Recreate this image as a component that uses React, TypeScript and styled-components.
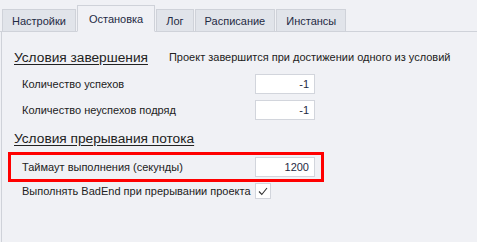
import { styled, createGlobalStyle } from "styled-components";

const GlobalStyle = createGlobalStyle`
  html, body {
    margin: 0;
    padding: 0;
    background: #f0f1f5;
    font-family: "Liberation Sans", Arial, sans-serif;
  }
`;

const Window = styled.div`
  width: 477px;
  height: 242px;
  display: flex;
  flex-direction: column;
  background: #f0f1f5;
  overflow: hidden;
`;

const TabStrip = styled.div`
  display: flex;
  align-items: flex-end;
  height: 32px;
  padding-left: 2px;
  border-bottom: 1px solid #cfd2d9;
  box-sizing: border-box;
`;

const Tab = styled.div<{ $active?: boolean }>`
  height: ${(p) => (p.$active ? "27px" : "23px")};
  margin-bottom: -1px;
  padding: 0 ${(p) => (p.$active ? "11px" : "9px")};
  display: flex;
  align-items: center;
  font-size: 11px;
  color: #1f2a44;
  background: ${(p) => (p.$active ? "#f0f1f5" : "#e1e4ea")};
  border: 1px solid #cfd2d9;
  border-bottom-color: ${(p) => (p.$active ? "#f0f1f5" : "#cfd2d9")};
  box-sizing: border-box;
  & + & {
    margin-left: 1px;
  }
`;

const Panel = styled.div`
  flex: 1;
  margin-left: 1px;
  border-left: 1px solid #cfd2d9;
  display: flex;
  flex-direction: column;
  padding-top: 15px;
`;

const SectionRow = styled.div<{ $top?: number }>`
  display: flex;
  align-items: center;
  height: 20px;
  padding-left: 12px;
  margin-top: ${(p) => p.$top ?? 0}px;
  white-space: nowrap;
`;

const SectionTitle = styled.span`
  font-size: 13.7px;
  color: #222;
  text-decoration: underline;
  text-underline-offset: 2px;
`;

const Note = styled.span`
  margin-left: 21px;
  font-size: 11px;
  color: #222;
`;

const FieldRow = styled.div<{ $top?: number; $highlight?: boolean }>`
  display: grid;
  grid-template-columns: 233px 60px;
  align-items: center;
  margin-top: ${(p) => p.$top ?? 0}px;
  ${(p) =>
    p.$highlight
      ? `
    margin-left: 6px;
    width: 316px;
    box-sizing: border-box;
    border: 3px solid #ff0000;
    padding: 2px 0 2px 11px;
  `
      : `
    padding-left: 20px;
  `}
`;

const Label = styled.span`
  font-size: 11px;
  color: #222;
  white-space: nowrap;
`;

const NumberBox = styled.div`
  height: 20px;
  box-sizing: border-box;
  background: #fff;
  border: 1px solid #d2d5dc;
  font-size: 11px;
  color: #1f2a44;
  display: flex;
  align-items: center;
  justify-content: flex-end;
  padding-right: 5px;
`;

const CheckRow = styled.div`
  display: grid;
  grid-template-columns: 233px 16px;
  align-items: center;
  padding-left: 20px;
  margin-top: 1px;
`;

const CheckBox = styled.div`
  width: 16px;
  height: 16px;
  box-sizing: border-box;
  background: #fff;
  border: 1px solid #d2d5dc;
  display: flex;
  align-items: center;
  justify-content: center;
`;

const tabs = ["Настройки", "Остановка", "Лог", "Расписание", "Инстансы"];

export default function App() {
  return (
    <Window>
      <GlobalStyle />
      <TabStrip>
        {tabs.map((t) => (
          <Tab key={t} $active={t === "Остановка"}>
            {t}
          </Tab>
        ))}
      </TabStrip>
      <Panel>
        <SectionRow>
          <SectionTitle>Условия завершения</SectionTitle>
          <Note>Проект завершится при достижении одного из условий</Note>
        </SectionRow>
        <FieldRow $top={7}>
          <Label>Количество успехов</Label>
          <NumberBox>-1</NumberBox>
        </FieldRow>
        <FieldRow $top={6}>
          <Label>Количество неуспехов подряд</Label>
          <NumberBox>-1</NumberBox>
        </FieldRow>
        <SectionRow $top={8}>
          <SectionTitle>Условия прерывания потока</SectionTitle>
        </SectionRow>
        <FieldRow $top={4} $highlight>
          <Label>Таймаут выполнения (секунды)</Label>
          <NumberBox>1200</NumberBox>
        </FieldRow>
        <CheckRow>
          <Label>Выполнять BadEnd при прерывании проекта</Label>
          <CheckBox>
            <svg width="10" height="9" viewBox="0 0 10 9">
              <path d="M1 4.5 L3.8 7.5 L9 1" fill="none" stroke="#333" strokeWidth="1.1" />
            </svg>
          </CheckBox>
        </CheckRow>
      </Panel>
    </Window>
  );
}
